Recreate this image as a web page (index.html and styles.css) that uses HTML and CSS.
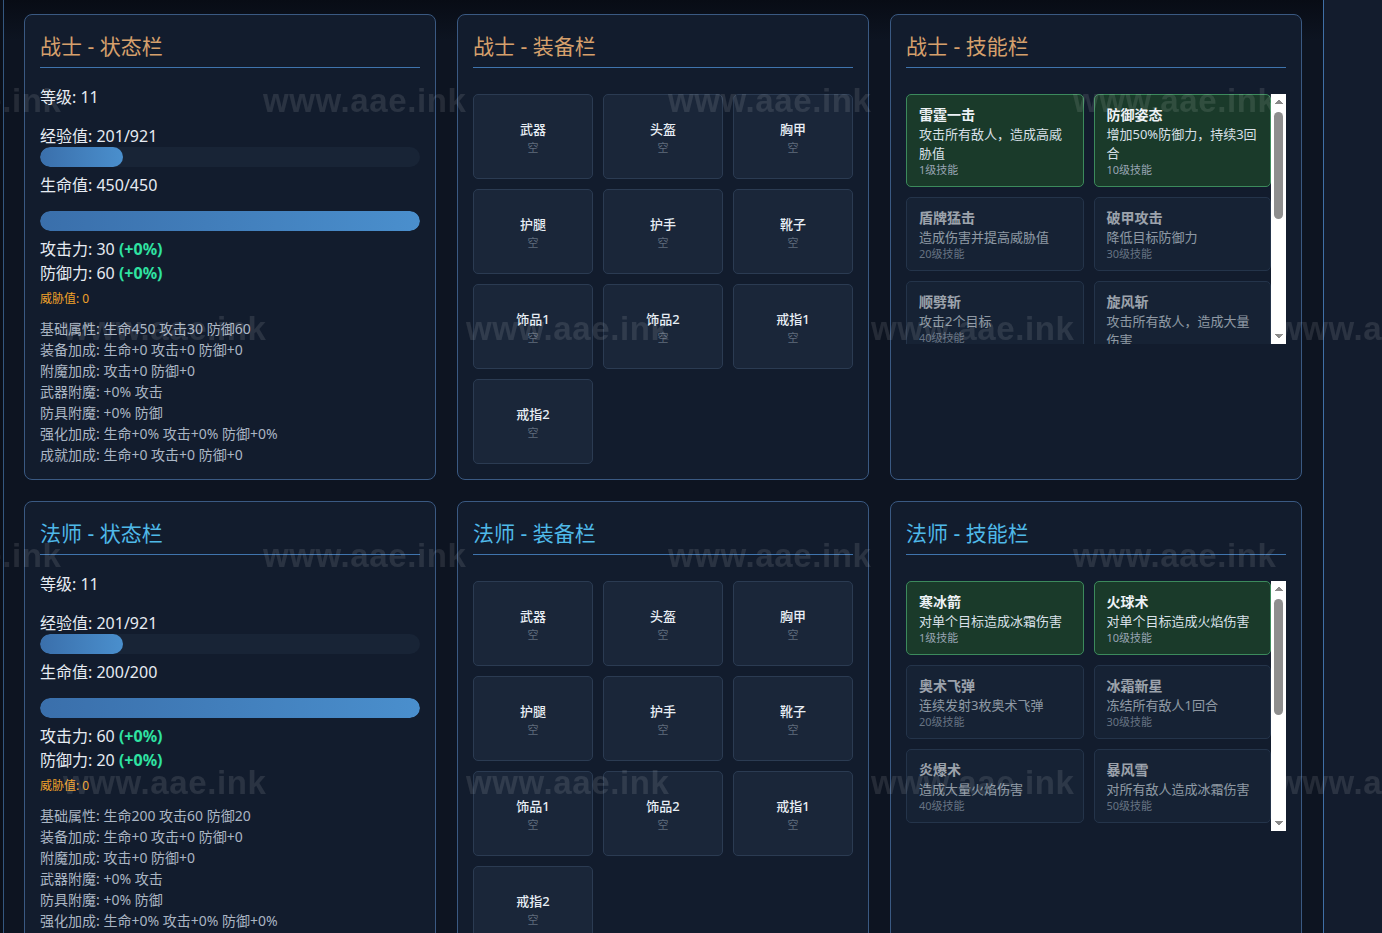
FILE: index.html
```html
<!DOCTYPE html>
<html lang="zh-CN">
<head>
<meta charset="utf-8">
<title>角色面板</title>
<link rel="stylesheet" href="styles.css">
</head>
<body>
<div class="page">
  <aside class="side-left"></aside>
  <main class="board">
    <!-- Warrior status -->
    <section class="panel">
      <h2 class="title warrior">战士 - 状态栏</h2>
      <div class="stat lvl">等级: 11</div>
      <div class="stat exp-label">经验值: 201/921</div>
      <div class="bar"><div class="fill" style="width:21.8%"></div></div>
      <div class="stat hp-label">生命值: 450/450</div>
      <div class="bar hp"><div class="fill" style="width:100%"></div></div>
      <div class="stat atk">攻击力: 30 <b class="bonus">(+0%)</b></div>
      <div class="stat def">防御力: 60 <b class="bonus">(+0%)</b></div>
      <div class="threat">威胁值: 0</div>
      <div class="details">
        <div>基础属性: 生命450 攻击30 防御60</div>
        <div>装备加成: 生命+0 攻击+0 防御+0</div>
        <div>附魔加成: 攻击+0 防御+0</div>
        <div>武器附魔: +0% 攻击</div>
        <div>防具附魔: +0% 防御</div>
        <div>强化加成: 生命+0% 攻击+0% 防御+0%</div>
        <div>成就加成: 生命+0 攻击+0 防御+0</div>
      </div>
    </section>

    <!-- Warrior equipment -->
    <section class="panel">
      <h2 class="title warrior">战士 - 装备栏</h2>
      <div class="equip">
        <div class="slot"><span class="slot-name">武器</span><span class="slot-empty">空</span></div>
        <div class="slot"><span class="slot-name">头盔</span><span class="slot-empty">空</span></div>
        <div class="slot"><span class="slot-name">胸甲</span><span class="slot-empty">空</span></div>
        <div class="slot"><span class="slot-name">护腿</span><span class="slot-empty">空</span></div>
        <div class="slot"><span class="slot-name">护手</span><span class="slot-empty">空</span></div>
        <div class="slot"><span class="slot-name">靴子</span><span class="slot-empty">空</span></div>
        <div class="slot"><span class="slot-name">饰品1</span><span class="slot-empty">空</span></div>
        <div class="slot"><span class="slot-name">饰品2</span><span class="slot-empty">空</span></div>
        <div class="slot"><span class="slot-name">戒指1</span><span class="slot-empty">空</span></div>
        <div class="slot"><span class="slot-name">戒指2</span><span class="slot-empty">空</span></div>
      </div>
    </section>

    <!-- Warrior skills -->
    <section class="panel">
      <h2 class="title warrior">战士 - 技能栏</h2>
      <div class="skills-wrap">
        <div class="skills">
          <div class="skill on"><div class="sk-name">雷霆一击</div><div class="sk-desc">攻击所有敌人，造成高威胁值</div><div class="sk-lv">1级技能</div></div>
          <div class="skill on"><div class="sk-name">防御姿态</div><div class="sk-desc">增加50%防御力，持续3回合</div><div class="sk-lv">10级技能</div></div>
          <div class="skill"><div class="sk-name">盾牌猛击</div><div class="sk-desc">造成伤害并提高威胁值</div><div class="sk-lv">20级技能</div></div>
          <div class="skill"><div class="sk-name">破甲攻击</div><div class="sk-desc">降低目标防御力</div><div class="sk-lv">30级技能</div></div>
          <div class="skill"><div class="sk-name">顺劈斩</div><div class="sk-desc">攻击2个目标</div><div class="sk-lv">40级技能</div></div>
          <div class="skill"><div class="sk-name">旋风斩</div><div class="sk-desc">攻击所有敌人，造成大量伤害</div><div class="sk-lv">50级技能</div></div>
          <div class="skill"><div class="sk-name">嘲讽</div><div class="sk-desc">强制敌人攻击自己</div><div class="sk-lv">60级技能</div></div>
          <div class="skill"><div class="sk-name">盾墙</div><div class="sk-desc">减少受到的伤害</div><div class="sk-lv">70级技能</div></div>
          <div class="skill"><div class="sk-name">战神之怒</div><div class="sk-desc">大幅提升攻击力，持续3回合</div><div class="sk-lv">80级技能</div></div>
          <div class="skill"><div class="sk-name">破釜沉舟</div><div class="sk-desc">牺牲防御换取暴击</div><div class="sk-lv">90级技能</div></div>
        </div>
        <div class="sbar" aria-hidden="true">
          <span class="sb-btn up"></span>
          <div class="sb-track"><div class="sb-thumb" style="height:50%"></div></div>
          <span class="sb-btn down"></span>
        </div>
      </div>
    </section>

    <!-- Mage status -->
    <section class="panel">
      <h2 class="title mage">法师 - 状态栏</h2>
      <div class="stat lvl">等级: 11</div>
      <div class="stat exp-label">经验值: 201/921</div>
      <div class="bar"><div class="fill" style="width:21.8%"></div></div>
      <div class="stat hp-label">生命值: 200/200</div>
      <div class="bar hp"><div class="fill" style="width:100%"></div></div>
      <div class="stat atk">攻击力: 60 <b class="bonus">(+0%)</b></div>
      <div class="stat def">防御力: 20 <b class="bonus">(+0%)</b></div>
      <div class="threat">威胁值: 0</div>
      <div class="details">
        <div>基础属性: 生命200 攻击60 防御20</div>
        <div>装备加成: 生命+0 攻击+0 防御+0</div>
        <div>附魔加成: 攻击+0 防御+0</div>
        <div>武器附魔: +0% 攻击</div>
        <div>防具附魔: +0% 防御</div>
        <div>强化加成: 生命+0% 攻击+0% 防御+0%</div>
        <div>成就加成: 生命+0 攻击+0 防御+0</div>
      </div>
    </section>

    <!-- Mage equipment -->
    <section class="panel">
      <h2 class="title mage">法师 - 装备栏</h2>
      <div class="equip">
        <div class="slot"><span class="slot-name">武器</span><span class="slot-empty">空</span></div>
        <div class="slot"><span class="slot-name">头盔</span><span class="slot-empty">空</span></div>
        <div class="slot"><span class="slot-name">胸甲</span><span class="slot-empty">空</span></div>
        <div class="slot"><span class="slot-name">护腿</span><span class="slot-empty">空</span></div>
        <div class="slot"><span class="slot-name">护手</span><span class="slot-empty">空</span></div>
        <div class="slot"><span class="slot-name">靴子</span><span class="slot-empty">空</span></div>
        <div class="slot"><span class="slot-name">饰品1</span><span class="slot-empty">空</span></div>
        <div class="slot"><span class="slot-name">饰品2</span><span class="slot-empty">空</span></div>
        <div class="slot"><span class="slot-name">戒指1</span><span class="slot-empty">空</span></div>
        <div class="slot"><span class="slot-name">戒指2</span><span class="slot-empty">空</span></div>
      </div>
    </section>

    <!-- Mage skills -->
    <section class="panel">
      <h2 class="title mage">法师 - 技能栏</h2>
      <div class="skills-wrap">
        <div class="skills">
          <div class="skill on"><div class="sk-name">寒冰箭</div><div class="sk-desc">对单个目标造成冰霜伤害</div><div class="sk-lv">1级技能</div></div>
          <div class="skill on"><div class="sk-name">火球术</div><div class="sk-desc">对单个目标造成火焰伤害</div><div class="sk-lv">10级技能</div></div>
          <div class="skill"><div class="sk-name">奥术飞弹</div><div class="sk-desc">连续发射3枚奥术飞弹</div><div class="sk-lv">20级技能</div></div>
          <div class="skill"><div class="sk-name">冰霜新星</div><div class="sk-desc">冻结所有敌人1回合</div><div class="sk-lv">30级技能</div></div>
          <div class="skill"><div class="sk-name">炎爆术</div><div class="sk-desc">造成大量火焰伤害</div><div class="sk-lv">40级技能</div></div>
          <div class="skill"><div class="sk-name">暴风雪</div><div class="sk-desc">对所有敌人造成冰霜伤害</div><div class="sk-lv">50级技能</div></div>
          <div class="skill"><div class="sk-name">法力护盾</div><div class="sk-desc">消耗法力吸收伤害</div><div class="sk-lv">60级技能</div></div>
          <div class="skill"><div class="sk-name">闪现术</div><div class="sk-desc">瞬间躲避一次攻击</div><div class="sk-lv">70级技能</div></div>
          <div class="skill"><div class="sk-name">流星火雨</div><div class="sk-desc">对所有敌人造成火焰伤害</div><div class="sk-lv">80级技能</div></div>
          <div class="skill"><div class="sk-name">时间停止</div><div class="sk-desc">所有敌人跳过1回合</div><div class="sk-lv">90级技能</div></div>
        </div>
        <div class="sbar" aria-hidden="true">
          <span class="sb-btn up"></span>
          <div class="sb-track"><div class="sb-thumb" style="height:54%"></div></div>
          <span class="sb-btn down"></span>
        </div>
      </div>
    </section>
  </main>
  <aside class="side-right"></aside>
</div>

<div class="watermarks" aria-hidden="true">
  <span class="wm" style="left:-142px;top:81px">www.aae.ink</span>
  <span class="wm" style="left:263px;top:81px">www.aae.ink</span>
  <span class="wm" style="left:668px;top:81px">www.aae.ink</span>
  <span class="wm" style="left:1073px;top:81px">www.aae.ink</span>
  <span class="wm" style="left:63px;top:309px">www.aae.ink</span>
  <span class="wm" style="left:466px;top:309px">www.aae.ink</span>
  <span class="wm" style="left:871px;top:309px">www.aae.ink</span>
  <span class="wm" style="left:1276px;top:309px">www.aae.ink</span>
  <span class="wm" style="left:-142px;top:536px">www.aae.ink</span>
  <span class="wm" style="left:263px;top:536px">www.aae.ink</span>
  <span class="wm" style="left:668px;top:536px">www.aae.ink</span>
  <span class="wm" style="left:1073px;top:536px">www.aae.ink</span>
  <span class="wm" style="left:63px;top:763px">www.aae.ink</span>
  <span class="wm" style="left:466px;top:763px">www.aae.ink</span>
  <span class="wm" style="left:871px;top:763px">www.aae.ink</span>
  <span class="wm" style="left:1276px;top:763px">www.aae.ink</span>
</div>
</body>
</html>
```

FILE: styles.css
```css
html, body {
  margin: 0;
  height: 100%;
  overflow: hidden;
}

body {
  background: #0b111c;
  font-family: "Noto Sans", "Noto Sans CJK SC", sans-serif;
  color: #e4e9f0;
}

.page {
  display: flex;
  height: 100%;
}

.side-left {
  width: 3px;
  flex: none;
  background: #0a0f19;
  border-right: 1px solid #34577f;
}

.board {
  width: 1319px;
  flex: none;
  box-sizing: border-box;
  padding: 14px 21px 0 20px;
  background: linear-gradient(180deg, #080c15 0, #0d1421 40px, #0d1421 100%);
  display: grid;
  grid-template-columns: repeat(3, 412px);
  column-gap: 21px;
  row-gap: 21px;
  align-content: start;
}

.side-right {
  flex: 1;
  background: #131c2d;
  border-left: 1px solid #3f6fa6;
}

/* ---------- panel ---------- */
.panel {
  box-sizing: border-box;
  background: #121c2d;
  border: 1px solid #3a5982;
  border-radius: 8px;
  padding: 16px 15px 14px;
  min-width: 0;
}

.title {
  margin: 0;
  font-size: 21px;
  line-height: 30px;
  font-weight: 400;
  padding-bottom: 6px;
  border-bottom: 1px solid #3f74ad;
}

.title.warrior {
  color: #d6a06c;
}

.title.mage {
  color: #4fb9e8;
}

/* ---------- status ---------- */
.stat {
  font-size: 16px;
  line-height: 22px;
  color: #e6ebf2;
}

.lvl { margin-top: 18px; }
.exp-label { margin-top: 17px; }
.hp-label { margin-top: 7px; }

.bar {
  height: 20px;
  border-radius: 10px;
  background-color: #182436;
  overflow: hidden;
}

.bar.hp { margin-top: 15px; }

.fill {
  height: 100%;
  border-radius: 10px;
  background: linear-gradient(90deg, #3a6fab 0%, #4a8fcd 100%);
}

.atk { margin-top: 6px; line-height: 24px; }
.def { line-height: 24px; }

.bonus {
  color: #2fe3a2;
  font-weight: 700;
}

.threat {
  margin-top: 5px;
  font-size: 12px;
  line-height: 18px;
  color: #f0a22a;
}

.details {
  margin-top: 10px;
  font-size: 14px;
  line-height: 21px;
  color: #aab5c3;
}

/* ---------- equipment ---------- */
.equip {
  margin-top: 26px;
  display: grid;
  grid-template-columns: repeat(3, 1fr);
  grid-auto-rows: 85px;
  gap: 10px;
}

.slot {
  box-sizing: border-box;
  background: #1a2639;
  border: 1px solid #2b3b52;
  border-radius: 5px;
  display: flex;
  flex-direction: column;
  align-items: center;
  justify-content: center;
  padding-top: 3px;
}

.slot-name {
  font-size: 13px;
  line-height: 18px;
  font-weight: 500;
  color: #e8eef5;
}

.slot-empty {
  font-size: 11px;
  line-height: 16px;
  margin-top: 2px;
  color: #5f6b7c;
}

/* ---------- skills ---------- */
.skills-wrap {
  margin-top: 26px;
  height: 250px;
  display: flex;
}

.skills {
  flex: 1;
  min-width: 0;
  overflow-y: auto;
  scrollbar-width: none;
  display: grid;
  grid-template-columns: 1fr 1fr;
  gap: 10px;
  align-content: start;
}

.skill {
  box-sizing: border-box;
  background: #162234;
  border: 1px solid #24344a;
  border-radius: 5px;
  padding: 10px 12px 9px;
  min-width: 0;
}

.skill > div { opacity: 0.62; }

.skill.on {
  background: #1a3a2a;
  border-color: #3c8a5c;
}

.skill.on > div { opacity: 1; }

.sk-name {
  font-size: 14px;
  line-height: 20px;
  font-weight: 700;
  color: #eef2f6;
}

.sk-desc {
  font-size: 13px;
  line-height: 19px;
  color: #d9e0e8;
}

.sk-lv {
  font-size: 11px;
  line-height: 14px;
  color: #98a4b3;
}

/* drawn scrollbar (the capture hides native ones) */
.sbar {
  width: 15px;
  flex: none;
  background: #ffffff;
  display: flex;
  flex-direction: column;
}

.sb-btn {
  display: block;
  height: 15px;
  flex: none;
  background-repeat: no-repeat;
  background-position: center;
  background-size: 8px 5px;
}

.sb-btn.up {
  background-image: conic-gradient(from 141deg at 50% 0%, #8a8a8a 0deg 78deg, transparent 78deg);
}

.sb-btn.down {
  background-image: conic-gradient(from -39deg at 50% 100%, #8a8a8a 0deg 78deg, transparent 78deg);
}

.sb-track {
  flex: 1;
  padding: 3px 3px;
  box-sizing: border-box;
}

.sb-thumb {
  background: #8e8e8e;
  border-radius: 5px;
}

/* ---------- watermark overlay ---------- */
.watermarks {
  position: fixed;
  inset: 0;
  pointer-events: none;
  overflow: hidden;
  z-index: 10;
}

.wm {
  position: absolute;
  font-family: "Liberation Sans", Arial, sans-serif;
  font-weight: 700;
  font-size: 33px;
  line-height: 40px;
  letter-spacing: 0.6px;
  color: rgba(255, 255, 255, 0.1);
  white-space: nowrap;
}
```
